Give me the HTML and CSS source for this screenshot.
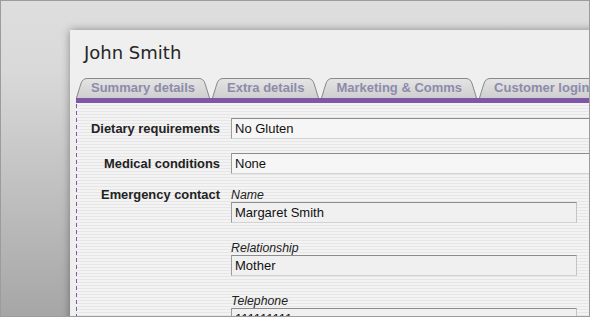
FILE: index.html
```html
<!DOCTYPE html>
<html>
<head>
<meta charset="utf-8">
<link rel="stylesheet" href="styles.css">
</head>
<body>
<div class="frame">
  <div class="window">
    <h1 class="title">John Smith</h1>
    <svg class="defs" width="0" height="0" aria-hidden="true">
      <defs>
        <linearGradient id="tabfill" gradientUnits="userSpaceOnUse" x1="0" y1="0" x2="0" y2="20">
          <stop offset="0" stop-color="#e4e4e4"/>
          <stop offset="1" stop-color="#cfcfcf"/>
        </linearGradient>
      </defs>
    </svg>
    <nav class="tabs">
      <div class="tab">
        <svg class="corner" width="12" height="20" viewBox="0 0 12 20"><path d="M0,20 L4.5,6 Q6.2,0.5 11,0.5 L12,0.5 L12,20 Z" fill="url(#tabfill)"/><path d="M0.5,20 L4.8,6 Q6.4,0.5 11,0.5 L12,0.5" fill="none" stroke="#8a8a8a"/></svg>
        <span class="tab-label">Summary details</span>
        <svg class="corner" width="12" height="20" viewBox="0 0 12 20"><path d="M0,0.5 L1,0.5 Q5.8,0.5 7.5,6 L12,20 L0,20 Z" fill="url(#tabfill)"/><path d="M0,0.5 L1,0.5 Q5.6,0.5 7.2,6 L11.5,20" fill="none" stroke="#8a8a8a"/></svg>
      </div>
      <div class="tab">
        <svg class="corner" width="12" height="20" viewBox="0 0 12 20"><path d="M0,20 L4.5,6 Q6.2,0.5 11,0.5 L12,0.5 L12,20 Z" fill="url(#tabfill)"/><path d="M0.5,20 L4.8,6 Q6.4,0.5 11,0.5 L12,0.5" fill="none" stroke="#8a8a8a"/></svg>
        <span class="tab-label">Extra details</span>
        <svg class="corner" width="12" height="20" viewBox="0 0 12 20"><path d="M0,0.5 L1,0.5 Q5.8,0.5 7.5,6 L12,20 L0,20 Z" fill="url(#tabfill)"/><path d="M0,0.5 L1,0.5 Q5.6,0.5 7.2,6 L11.5,20" fill="none" stroke="#8a8a8a"/></svg>
      </div>
      <div class="tab">
        <svg class="corner" width="12" height="20" viewBox="0 0 12 20"><path d="M0,20 L4.5,6 Q6.2,0.5 11,0.5 L12,0.5 L12,20 Z" fill="url(#tabfill)"/><path d="M0.5,20 L4.8,6 Q6.4,0.5 11,0.5 L12,0.5" fill="none" stroke="#8a8a8a"/></svg>
        <span class="tab-label">Marketing &amp; Comms</span>
        <svg class="corner" width="12" height="20" viewBox="0 0 12 20"><path d="M0,0.5 L1,0.5 Q5.8,0.5 7.5,6 L12,20 L0,20 Z" fill="url(#tabfill)"/><path d="M0,0.5 L1,0.5 Q5.6,0.5 7.2,6 L11.5,20" fill="none" stroke="#8a8a8a"/></svg>
      </div>
      <div class="tab">
        <svg class="corner" width="12" height="20" viewBox="0 0 12 20"><path d="M0,20 L4.5,6 Q6.2,0.5 11,0.5 L12,0.5 L12,20 Z" fill="url(#tabfill)"/><path d="M0.5,20 L4.8,6 Q6.4,0.5 11,0.5 L12,0.5" fill="none" stroke="#8a8a8a"/></svg>
        <span class="tab-label">Customer login</span>
        <svg class="corner" width="12" height="20" viewBox="0 0 12 20"><path d="M0,0.5 L1,0.5 Q5.8,0.5 7.5,6 L12,20 L0,20 Z" fill="url(#tabfill)"/><path d="M0,0.5 L1,0.5 Q5.6,0.5 7.2,6 L11.5,20" fill="none" stroke="#8a8a8a"/></svg>
      </div>
    </nav>
    <div class="bar"></div>
    <div class="panel">
      <div class="form">
        <div class="label">Dietary requirements</div>
        <div class="input wide">No Gluten</div>

        <div class="label">Medical conditions</div>
        <div class="input wide">None</div>

        <div class="label">Emergency contact</div>
        <div class="group">
          <div class="sub-label">Name</div>
          <div class="input sub">Margaret Smith</div>
          <div class="sub-label spaced">Relationship</div>
          <div class="input sub">Mother</div>
          <div class="sub-label spaced">Telephone</div>
          <div class="input sub">111111111</div>
        </div>
      </div>
    </div>
  </div>
</div>
</body>
</html>
```

FILE: styles.css
```css
html, body {
  margin: 0;
  padding: 0;
}

body {
  width: 590px;
  height: 317px;
  overflow: hidden;
  font-family: "Liberation Sans", Arial, sans-serif;
}

.frame {
  box-sizing: border-box;
  width: 590px;
  height: 317px;
  border: 1px solid #9c9c9c;
  overflow: hidden;
  padding: 29px 0 0 69px;
  background: linear-gradient(to bottom, #dedede 0%, #d9d9d9 22%, #a6a6a6 100%);
}

.window {
  width: 560px;
  height: 400px;
  background: #efefef;
  box-shadow: 0 0 8px rgba(0, 0, 0, 0.38);
  padding-top: 12px;
}

.title {
  margin: 0 0 0 14px;
  font-family: "DejaVu Sans", sans-serif;
  font-weight: normal;
  font-size: 18px;
  line-height: 22px;
  color: #262626;
}

.defs {
  display: block;
  width: 0;
  height: 0;
  overflow: hidden;
}

.tabs {
  display: flex;
  gap: 2px;
  margin: 14px 0 0 6px;
  white-space: nowrap;
}

.tab {
  display: flex;
  flex: none;
  height: 20px;
}

.corner {
  display: block;
  flex: none;
}

.tab-label {
  box-sizing: border-box;
  height: 20px;
  padding: 0 3px;
  border-top: 1px solid #8a8a8a;
  background: linear-gradient(to bottom, #e4e4e4, #cfcfcf);
  font-size: 13px;
  font-weight: bold;
  line-height: 18px;
  color: #8d8bab;
}

.bar {
  height: 5px;
  margin-left: 6px;
  background: #7f56a8;
}

.panel {
  box-sizing: border-box;
  margin-left: 6px;
  height: 300px;
  padding-left: 1px;
  background:
    linear-gradient(to bottom, #7f56a8 0, #7f56a8 4px, transparent 4px, transparent 7px) 0 1px / 1px 7px repeat-y,
    repeating-linear-gradient(to bottom, #f3f3f3 0, #f3f3f3 2px, #e6e6e6 2px, #e6e6e6 3px);
}

.form {
  display: grid;
  grid-template-columns: 143px 1fr;
  column-gap: 11px;
  row-gap: 14px;
  align-items: baseline;
  padding-top: 15px;
}

.label {
  text-align: right;
  font-size: 12.9px;
  font-weight: bold;
  line-height: 14px;
  color: #222;
  white-space: nowrap;
}

.input {
  box-sizing: border-box;
  height: 21px;
  padding: 0 3px;
  border: 1px solid;
  border-color: #8c8c8c #c4c4c4 #d2d2d2 #9c9c9c;
  font-size: 13px;
  line-height: 19px;
  color: #111;
  white-space: nowrap;
}

.wide {
  width: 420px;
  background: #f6f6f6;
}

.sub {
  width: 346px;
  background: #f0f0f0;
}

.group {
  display: flex;
  flex-direction: column;
  align-items: flex-start;
}

.sub-label {
  font-size: 12.3px;
  font-style: italic;
  line-height: 14px;
  color: #222;
}

.spaced {
  margin-top: 18px;
}
```
